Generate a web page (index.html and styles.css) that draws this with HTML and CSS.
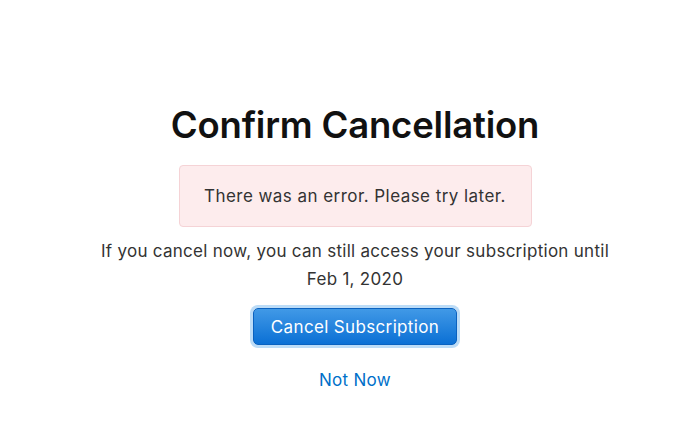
FILE: index.html
```html
<!DOCTYPE html>
<html lang="en">
<head>
<meta charset="utf-8">
<title>Confirm Cancellation</title>
<link rel="stylesheet" href="styles.css">
</head>
<body>
<main class="page">
  <h1 class="title">Confirm Cancellation</h1>
  <div class="alert">There was an error. Please try later.</div>
  <p class="info">If you cancel now, you can still access your subscription until Feb 1, 2020</p>
  <button class="btn-primary">Cancel Subscription</button>
  <a class="link" href="#">Not Now</a>
</main>
</body>
</html>
```

FILE: styles.css
```css
html, body {
  margin: 0;
  padding: 0;
  background: #fff;
}
body {
  font-family: Inter, "Noto Sans", "Liberation Sans", sans-serif;
  color: #333;
}
.page {
  display: flex;
  flex-direction: column;
  align-items: center;
  padding-top: 100px;
  padding-left: 19px;
}
.title {
  margin: 0;
  font-size: 36.5px;
  font-weight: 600;
  color: #111;
  letter-spacing: -0.2px;
  line-height: 50px;
}
.alert {
  margin-top: 15px;
  width: 353px;
  height: 62px;
  box-sizing: border-box;
  display: flex;
  align-items: center;
  justify-content: center;
  background: #fdeced;
  border: 1px solid #f5d3d6;
  border-radius: 4px;
  font-size: 17px;
  letter-spacing: 0.45px;
  color: #333;
}
.info {
  margin: 10px 0 0;
  width: 540px;
  text-align: center;
  font-size: 17px;
  letter-spacing: 0.28px;
  line-height: 28px;
  color: #333;
}
.btn-primary {
  margin-top: 15px;
  width: 204px;
  height: 37px;
  border: 1px solid #0a62c0;
  border-radius: 5px;
  background: linear-gradient(#4199e6, #0b70d5);
  color: #fff;
  font-family: inherit;
  font-size: 17px;
  letter-spacing: 0.35px;
  box-shadow: 0 0 0 3px #bcdcf7;
}
.link {
  margin-top: 25px;
  font-size: 17px;
  letter-spacing: 0.3px;
  color: #0070c9;
  text-decoration: none;
}
```
